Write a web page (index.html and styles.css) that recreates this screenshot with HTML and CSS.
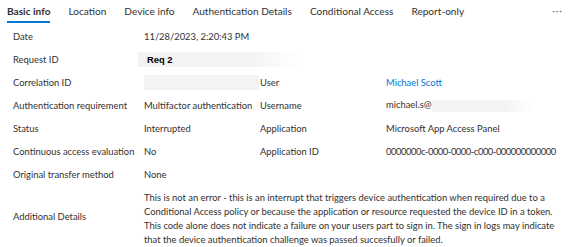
FILE: index.html
```html
<!DOCTYPE html>
<html lang="en">
<head>
  <meta charset="UTF-8" />
  <title>Sign-in activity details</title>
  <link rel="stylesheet" href="styles.css">
</head>
<body>

  <!-- Tabs -->
  <nav class="tabs">
    <span class="tab active">Basic info</span>
    <span class="tab">Location</span>
    <span class="tab">Device info</span>
    <span class="tab">Authentication Details</span>
    <span class="tab">Conditional Access</span>
    <span class="tab">Report-only</span>
    <span class="more">&middot;&middot;&middot;</span>
  </nav>

  <!-- Details grid -->
  <div class="details">
    <div class="label">Date</div>
    <div class="value wide">11/28/2023, 2:20:43 PM</div>

    <div class="label">Request ID</div>
    <div class="value wide"><span class="masked req">Req 2</span></div>

    <div class="label">Correlation ID</div>
    <div class="value"><span class="masked corr"></span></div>
    <div class="label">User</div>
    <div class="value"><a class="link" href="#">Michael Scott</a></div>

    <div class="label">Authentication requirement</div>
    <div class="value">Multifactor authentication</div>
    <div class="label">Username</div>
    <div class="value">michael.s@<span class="masked mail"></span></div>

    <div class="label">Status</div>
    <div class="value">Interrupted</div>
    <div class="label">Application</div>
    <div class="value">Microsoft App Access Panel</div>

    <div class="label">Continuous access evaluation</div>
    <div class="value">No</div>
    <div class="label">Application ID</div>
    <div class="value guid">0000000c-0000-0000-c000-000000000000</div>

    <div class="label">Original transfer method</div>
    <div class="value wide">None</div>

    <div class="label">Additional Details</div>
    <div class="value wide para">This is not an error - this is an interrupt that triggers device authentication when required due to a Conditional Access policy or because the application or resource requested the device ID in a token. This code alone does not indicate a failure on your users part to sign in. The sign in logs may indicate that the device authentication challenge was passed succesfully or failed.</div>
  </div>

</body>
</html>
```

FILE: styles.css
```css
* {
  margin: 0;
  padding: 0;
  box-sizing: border-box;
}

body {
  background: #fff;
  color: #323130;
  font-family: 'Lato', 'Noto Sans', sans-serif;
  font-size: 9.4px;
}

/* Tabs */
.tabs {
  display: flex;
  align-items: flex-start;
  padding: 3px 0 0 7px;
  height: 24px;
  font-size: 10.1px;
}

.tab {
  margin-right: 18px;
  height: 20px;
  line-height: 16px;
  color: #323130;
  white-space: nowrap;
}

.tab.active {
  border-bottom: 2px solid #0078d4;
  font-weight: 700;
}

.more {
  margin-left: auto;
  margin-right: 7px;
  color: #605e5c;
  letter-spacing: 1px;
  line-height: 14px;
}

/* Details */
.details {
  display: grid;
  grid-template-columns: 131px 116px 126px minmax(0, 1fr);
  grid-template-rows: repeat(7, 23px) auto;
  padding: 1px 0 0 13px;
  align-items: center;
}

.value.wide {
  grid-column: 2 / 5;
}

.label, .value {
  white-space: nowrap;
}

.guid {
  letter-spacing: -0.45px;
}

.masked {
  display: inline-block;
  background: linear-gradient(to right, #f3f3f3 70%, #fff);
  height: 15px;
  vertical-align: middle;
}

.req {
  margin-left: -6px;
  width: 162px;
  padding-left: 9px;
  font-family: 'Liberation Sans', Arial, sans-serif;
  font-weight: bold;
  line-height: 15px;
  color: #000;
}

.corr {
  width: 115px;
  background: #f3f3f3;
}

.mail {
  width: 102px;
  height: 12px;
}

.link {
  color: #0078d4;
  text-decoration: none;
}

.para {
  white-space: normal;
  line-height: 14px;
  padding-top: 5px;
  max-width: 412px;
}
```
